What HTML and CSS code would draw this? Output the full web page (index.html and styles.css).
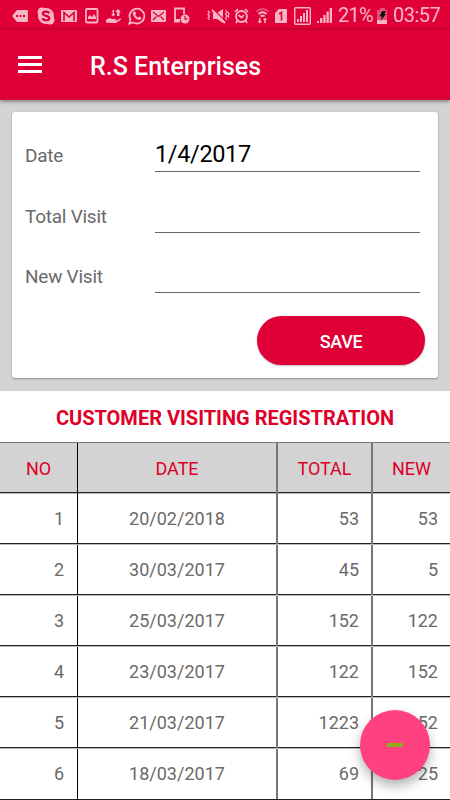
FILE: index.html
```html
<!DOCTYPE html>
<html>
<head>
  <meta charset="utf-8">
  <meta name="viewport" content="width=device-width, initial-scale=1.0">
  <title>R.S Enterprises</title>
  <link rel="stylesheet" href="styles.css">
</head>
<body>
  <div class="statusbar">
    <svg width="16" height="14" viewBox="0 0 16 14"><path class="fill" d="M5 1h10q1 0 1 1v10q0 1-1 1H5L0 7z"/><path class="cut" d="M4 6h2v2H4zM7.500 6h2v2h-2zM11 6h2v2h-2z"/></svg>
    <svg width="18" height="18" viewBox="0 0 18 18"><circle class="fill" cx="9" cy="9" r="8"/><circle class="fill" cx="5" cy="5" r="4.500"/><circle class="fill" cx="13" cy="13" r="4.500"/><path class="cut-line" d="M12.300 6.200C11 4 6 4 5.800 6.500c0 3 6.500 1.700 6.500 4.700 0 2.700-5.500 2.800-6.800 0" stroke-width="2.200"/></svg>
    <svg width="16" height="14" viewBox="0 0 16 14"><rect class="fill" x="0" y="1" width="16" height="12" rx="1"/><path class="cut-line" d="M3 12V3.500l5 4.500 5-4.500V12" stroke-width="1.600"/></svg>
    <svg width="14" height="16" viewBox="0 0 14 16"><rect class="line" x="1" y="1" width="11.500" height="13.500" rx="1" stroke-width="1.800"/><path class="fill" d="M3 11V9l2-2 2 2 2-3 2 3v2z"/></svg>
    <svg width="16" height="17" viewBox="0 0 16 17"><path class="fill" d="M0 13q3-3 6-1h4q1 1-1 1.500H7l4 0 3-2q2 0 1 1l-5 3.500H5l-5-.5zM6.500 3h1.500v4h1.500L7.200 9.500 5 7h1.500zM12 2l3 3h-1.500v4h-2.500V5H9z"/></svg>
    <svg width="18" height="18" viewBox="0 0 18 18"><path class="line" d="M1.300 16.700l1.200-4A7.400 7.400 0 1 1 5.300 15.500z" stroke-width="1.800"/><path class="fill" d="M5.500 4.500h1.700l1 2.300-.9 1.200q1 1.900 2.900 2.700l1.100-1.200 2.200 1.200q-.2 2.300-2.300 2.300C8 12.500 4.700 9 4.700 6.500q0-1.200.8-2z"/></svg>
    <svg width="15" height="14" viewBox="0 0 15 14"><rect class="fill" y="1" width="15" height="12" rx="1"/><path class="cut-line" d="M2 3l5.500 4.500L13 3M2 11l3.500-3.500M13 11L9.500 7.500" stroke-width="1.300"/></svg>
    <svg width="17" height="17" viewBox="0 0 17 17"><path class="line" d="M7 14.500H2V1.500h9V7" stroke-width="1.800"/><path class="fill" d="M2 12h5v3H2z"/><circle class="fill" cx="12" cy="12" r="4.500"/><path class="cut-line" d="M12 9v3.200h2.500" stroke-width="1.200"/></svg>
    <svg width="23" height="16" viewBox="0 0 23 16"><path class="fill" d="M6 5h4l6-4v14l-6-4H6z"/><path class="cut-line" d="M6 1l13 13" stroke-width="1.500"/><path class="line" d="M5 2L18 15" stroke-width="2"/><path class="line" d="M1 3l1.500 1.500L1 6.500 2.500 8 1 10l1.500 2M18.500 2L20 4l-1.500 2L20 8l-1.500 2 1.500 2M21 4l1 2-1 2 1 2" stroke-width="1.200"/></svg>
    <svg width="15" height="16" viewBox="0 0 15 16"><circle class="line" cx="7.500" cy="8.500" r="5.500" stroke-width="1.800"/><path class="line" d="M1 4l3-3M14 4l-3-3M3.500 12.500L2 15M11.500 12.500L13 15M4.500 7l3 2.500L10 7" stroke-width="1.700"/></svg>
    <svg class="wifi" width="13" height="17" viewBox="0 0 13 17"><path class="line faded" d="M.5 4.500q6-5 12 0" stroke-width="1.700"/><path class="line" d="M2.500 7q4-3.500 8 0M4.500 9.500q2-1.800 4 0" stroke-width="1.700"/><path class="fill" d="M3 11h1.500v3H6l-2.300 2.500L1.500 14H3zM9 10.500l2 2.500h-1.200v3H8.200v-3H7z"/></svg>
    <svg width="12" height="16" viewBox="0 0 12 16"><path class="fill" d="M4 1h7q1 0 1 1v12q0 1-1 1H1q-1 0-1-1V5z"/><path class="cut-line" d="M4 6l2.500-1.500V12.500" stroke-width="1.700"/></svg>
    <svg width="17" height="18" viewBox="0 0 17 18"><rect class="line" x=".7" y=".7" width="15.600" height="16.600" rx="1" stroke-width="1.400"/><path class="fill" d="M3 12h2v3H3zM6 9h2v6H6zM9 6h2v9H9zM12 3h2v12h-2z"/></svg>
    <svg width="16" height="17" viewBox="0 0 16 17"><path class="fill" d="M0 14h2v2H0zM3 11h2.300v5H3zM6.300 8h2.300v8H6.300zM9.500 4.500h2.300V16H9.500zM12.700 1H15v15h-2.300z"/></svg>
    <span class="percent">21%</span>
    <svg width="11" height="16" viewBox="0 0 11 16"><path class="fill faded" d="M3 0h5v2h2v10H0V2h3z"/><path class="fill" d="M0 12h10v4H0z"/><path class="bolt" d="M5 3h4L7.500 6H9l-5.500 7L5 8.500H2.500z"/></svg>
    <span class="clock">03:57</span>
  </div>

  <div class="toolbar">
    <div class="menu">
      <span></span>
      <span></span>
      <span></span>
    </div>
    <h1>R.S Enterprises</h1>
  </div>

  <div class="form-area">
    <form class="card">
      <div class="field">
        <label for="date">Date</label>
        <input type="text" id="date" value="1/4/2017">
      </div>
      <div class="field">
        <label for="total">Total Visit</label>
        <input type="text" id="total">
      </div>
      <div class="field">
        <label for="new">New Visit</label>
        <input type="text" id="new">
      </div>
      <button type="button" class="btn-save">SAVE</button>
    </form>
  </div>

  <h2>CUSTOMER VISITING REGISTRATION</h2>

  <div class="table">
    <div class="row head"><div>NO</div><div>DATE</div><div>TOTAL</div><div>NEW</div></div>
    <div class="row"><div>1</div><div>20/02/2018</div><div>53</div><div>53</div></div>
    <div class="row"><div>2</div><div>30/03/2017</div><div>45</div><div>5</div></div>
    <div class="row"><div>3</div><div>25/03/2017</div><div>152</div><div>122</div></div>
    <div class="row"><div>4</div><div>23/03/2017</div><div>122</div><div>152</div></div>
    <div class="row"><div>5</div><div>21/03/2017</div><div>1223</div><div>152</div></div>
    <div class="row"><div>6</div><div>18/03/2017</div><div>69</div><div>25</div></div>
  </div>

  <div class="fab"><span></span></div>
</body>
</html>
```

FILE: styles.css
```css
* {
  margin: 0;
  padding: 0;
  box-sizing: border-box;
}

body {
  width: 450px;
  height: 800px;
  font-family: Roboto, "Liberation Sans", sans-serif;
  background: #fff;
  color: #6a6a6a;
  overflow: hidden;
}

/* status bar */
.statusbar {
  display: grid;
  grid-template-columns: 25px 24px 24px 21px 22px 23px 22px 34px 27px 22px 19px 19px 23px 21px 39px 16px auto;
  align-items: center;
  height: 30px;
  padding-left: 12px;
  background: #df0037;
  color: #f8b4c4;
  font-size: 20px;
  line-height: 31px;
}

.statusbar svg {
  display: block;
}

.fill {
  fill: #f8b4c4;
}

.line {
  fill: none;
  stroke: #f8b4c4;
}

.cut {
  fill: #df0037;
}

.cut-line {
  fill: none;
  stroke: #df0037;
}

.faded {
  opacity: 0.45;
}

.bolt {
  fill: #111;
}

.percent {
  letter-spacing: -0.7px;
}

.clock {
  letter-spacing: -0.5px;
}

/* toolbar */
.toolbar {
  position: relative;
  display: flex;
  align-items: center;
  height: 70px;
  padding: 2px 18px 0;
  background: #df0037;
  box-shadow: 0 1px 4px rgba(0,0,0,0.5);
}

.menu {
  display: flex;
  flex-direction: column;
  gap: 4px;
  width: 24px;
  margin: 0 48px 3px 0;
}

.menu span {
  height: 3px;
  background: #fff;
}

h1 {
  color: #fff;
  font-size: 25px;
  font-weight: 500;
}

/* form */
.form-area {
  height: 291px;
  padding: 12px 12px 0;
  background: #d3d3d3;
}

.card {
  display: flex;
  flex-direction: column;
  height: 266px;
  padding: 14px 18px 0 13px;
  background: #fff;
  border-radius: 3px;
  box-shadow: 0 1px 2px rgba(0,0,0,0.35);
}

.field {
  display: flex;
  height: 60.5px;
}

label {
  width: 130px;
  padding-top: 17px;
  font-size: 19px;
  letter-spacing: -0.25px;
  line-height: 25px;
}

input {
  width: 265px;
  height: 46px;
  padding-top: 10px;
  border: none;
  border-bottom: 1px solid #666;
  outline: none;
  background: transparent;
  color: #000;
  font-family: inherit;
  font-size: 23.5px;
  letter-spacing: -0.35px;
}

.btn-save {
  align-self: flex-end;
  width: 168px;
  height: 49px;
  margin: 8px -5px 0 0;
  padding-top: 2px;
  border: none;
  border-radius: 25px;
  background: #df0037;
  color: #fff;
  font-family: inherit;
  font-size: 18px;
  font-weight: 500;
  letter-spacing: -0.3px;
  box-shadow: 0 1px 2px rgba(0,0,0,0.25);
}

h2 {
  height: 51px;
  color: #df0028;
  font-size: 20px;
  font-weight: 700;
  line-height: 54px;
  text-align: center;
}

/* table */
.table {
  border-top: 1px solid #777;
}

.row {
  display: grid;
  grid-template-columns: 78px 200px 95px 77px;
  height: 51.1px;
  border-top: 1px solid #bbb;
  border-bottom: 1px solid #222;
  font-size: 18px;
  line-height: 50px;
  text-align: right;
}

.row div {
  padding-right: 12px;
  border-right: 2px solid #777;
}

.row div:first-child {
  padding-right: 13px;
  border-right: 1px solid #000;
}

.row div:nth-child(2) {
  padding: 0;
  text-align: center;
}

.row div:last-child {
  border-right: none;
}

.row.head {
  height: 50px;
  border-top: none;
  background: #d3d3d3;
  color: #df0028;
  line-height: 51px;
}

.row.head div {
  padding: 0;
  text-align: center;
}

.fab {
  position: absolute;
  left: 360px;
  top: 710px;
  display: flex;
  align-items: center;
  justify-content: center;
  width: 70px;
  height: 70px;
  border-radius: 50%;
  background: #ff4081;
  box-shadow: 0 6px 12px rgba(0,0,0,0.3);
}

.fab span {
  width: 16px;
  height: 4px;
  background: #8fac16;
}
```
